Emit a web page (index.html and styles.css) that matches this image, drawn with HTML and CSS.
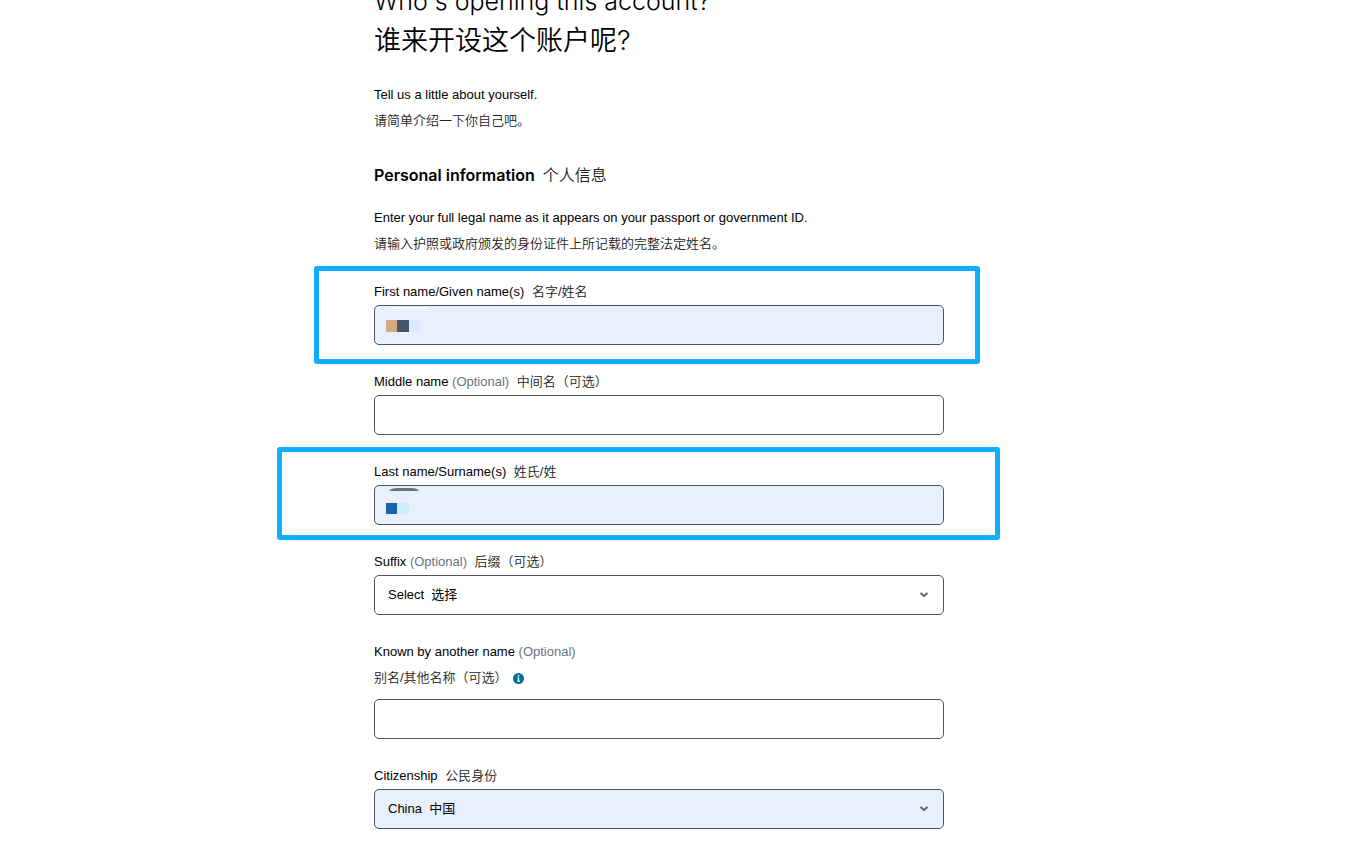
FILE: index.html
```html
<!DOCTYPE html>
<html lang="en">
<head>
    <meta charset="UTF-8">
    <meta name="viewport" content="width=device-width, initial-scale=1.0">
    <title>Who's opening this account?</title>
    <link rel="stylesheet" href="styles.css">
</head>
<body>
    <main class="container">
        <h1>Who's opening this account?<br><span lang="zh">谁来开设这个账户呢?</span></h1>
        <p class="intro">Tell us a little about yourself.<br><span class="zh" lang="zh">请简单介绍一下你自己吧。</span></p>

        <h2>Personal information <span class="zh" lang="zh">个人信息</span></h2>
        <p class="intro">Enter your full legal name as it appears on your passport or government ID.<br><span class="zh" lang="zh">请输入护照或政府颁发的身份证件上所记载的完整法定姓名。</span></p>

        <form>
            <div class="field">
                <label for="firstName">First name/Given name(s) <span class="zh gap" lang="zh">名字/姓名</span></label>
                <div class="control">
                    <input type="text" id="firstName" class="filled">
                    <svg class="mask" width="60" height="38" viewBox="0 0 60 38" aria-hidden="true">
                        <path d="M14 3 Q17 1 24 1 H46 Q52 1 55 3 Z" fill="#fff"/>
                        <path d="M11 14h11v12H11z" fill="#d1ac82"/>
                        <path d="M22 14h12v12H22z" fill="#44566a"/>
                        <path d="M34 14h11v12H34z" fill="#dbeafe"/>
                    </svg>
                </div>
                <div class="marker marker-first"></div>
            </div>

            <div class="field">
                <label for="middleName">Middle name <span class="optional">(Optional)</span> <span class="zh gap" lang="zh">中间名（可选）</span></label>
                <div class="control">
                    <input type="text" id="middleName">
                </div>
            </div>

            <div class="field">
                <label for="lastName">Last name/Surname(s) <span class="zh gap" lang="zh">姓氏/姓</span></label>
                <div class="control">
                    <input type="text" id="lastName" class="filled">
                    <svg class="mask" width="60" height="38" viewBox="0 0 60 38" aria-hidden="true">
                        <path d="M14 5 Q16 2 23 2 H36 Q42 2 44 5 Z" fill="#697380"/>
                        <path d="M11 17h11v11H11z" fill="#1a63ad"/>
                        <path d="M22 17h12v11H22z" fill="#cdeeff"/>
                    </svg>
                </div>
                <div class="marker marker-last"></div>
            </div>

            <div class="field">
                <label for="suffix">Suffix <span class="optional">(Optional)</span> <span class="zh gap" lang="zh">后缀（可选）</span></label>
                <div class="control">
                    <select id="suffix">
                        <option>Select&nbsp; 选择</option>
                    </select>
                    <svg class="chevron" width="10" height="6" viewBox="0 0 10 6" aria-hidden="true"><path d="M1.5 1 L5 4 L8.5 1"/></svg>
                </div>
            </div>

            <div class="field">
                <label for="otherName" class="stacked">Known by another name <span class="optional">(Optional)</span><br><span class="zh" lang="zh">别名/其他名称（可选）</span>
                    <svg class="info" width="11" height="11" viewBox="0 0 11 11" aria-hidden="true">
                        <circle cx="5.5" cy="5.5" r="5.5" fill="#006e96"/>
                        <path d="M4.8 2h1.5v1.4H4.8zM4.2 4.4h2v3.4h.7v.9H4.2v-.9h.6V5.3h-.6z" fill="#fff"/>
                    </svg>
                </label>
                <div class="control">
                    <input type="text" id="otherName">
                </div>
            </div>

            <div class="field">
                <label for="citizenship">Citizenship <span class="zh gap" lang="zh">公民身份</span></label>
                <div class="control">
                    <select id="citizenship" class="filled">
                        <option>China&nbsp; 中国</option>
                    </select>
                    <svg class="chevron" width="10" height="6" viewBox="0 0 10 6" aria-hidden="true"><path d="M1.5 1 L5 4 L8.5 1"/></svg>
                </div>
            </div>
        </form>
    </main>
</body>
</html>
```
FILE: styles.css
```css
* {
    margin: 0;
    padding: 0;
    box-sizing: border-box;
}

body {
    font-family: "Liberation Sans", "Noto Sans CJK SC", sans-serif;
    font-size: 13px;
    line-height: 26px;
    color: #000;
    background-color: #fff;
}

.container {
    max-width: 603px;
    margin: -18px auto 0;
    padding-right: 33px;
}

h1 {
    font-family: Inter, "Noto Sans CJK SC", sans-serif;
    font-size: 25px;
    font-weight: 300;
    line-height: 39px;
    margin-bottom: 21px;
}

h1 span {
    font-size: 27px;
    font-weight: 350;
}

h2 {
    font-family: Inter, "Noto Sans CJK SC", sans-serif;
    font-size: 16px;
    font-weight: 600;
    line-height: 26px;
    margin: 28px 0 17px;
}

h2 .zh {
    font-size: 16px;
}

.intro {
    margin-bottom: 22px;
}

.zh {
    font-weight: 350;
    color: #222;
    margin-left: 0;
}

h2 .zh,
.gap {
    margin-left: 4px;
}

.field {
    position: relative;
    margin-bottom: 24px;
}

.field label {
    display: block;
}

.field .stacked {
    margin-bottom: 8px;
}

.optional {
    color: #6b7280;
}

.control {
    position: relative;
}

input, select {
    display: block;
    width: 100%;
    height: 40px;
    padding: 0 13px;
    border: 1px solid #4b5563;
    border-radius: 5px;
    background-color: #fff;
    color: #000;
    font: inherit;
    appearance: none;
}

.filled {
    background-color: #e8f0fe;
}

.mask {
    position: absolute;
    top: 1px;
    left: 1px;
}

.chevron {
    position: absolute;
    top: 17px;
    right: 15px;
    fill: none;
    stroke: #5b6770;
    stroke-width: 2;
}

.info {
    vertical-align: -2px;
    margin-left: 2px;
}

/* highlight frames drawn over the required fields */
.marker {
    position: absolute;
    border: 5px solid #10aeff;
    border-radius: 3px;
    pointer-events: none;
}

.marker-first {
    top: -13px;
    right: -36px;
    bottom: -19px;
    left: -60px;
}

.marker-last {
    top: -12px;
    right: -56px;
    bottom: -15px;
    left: -97px;
}
```
